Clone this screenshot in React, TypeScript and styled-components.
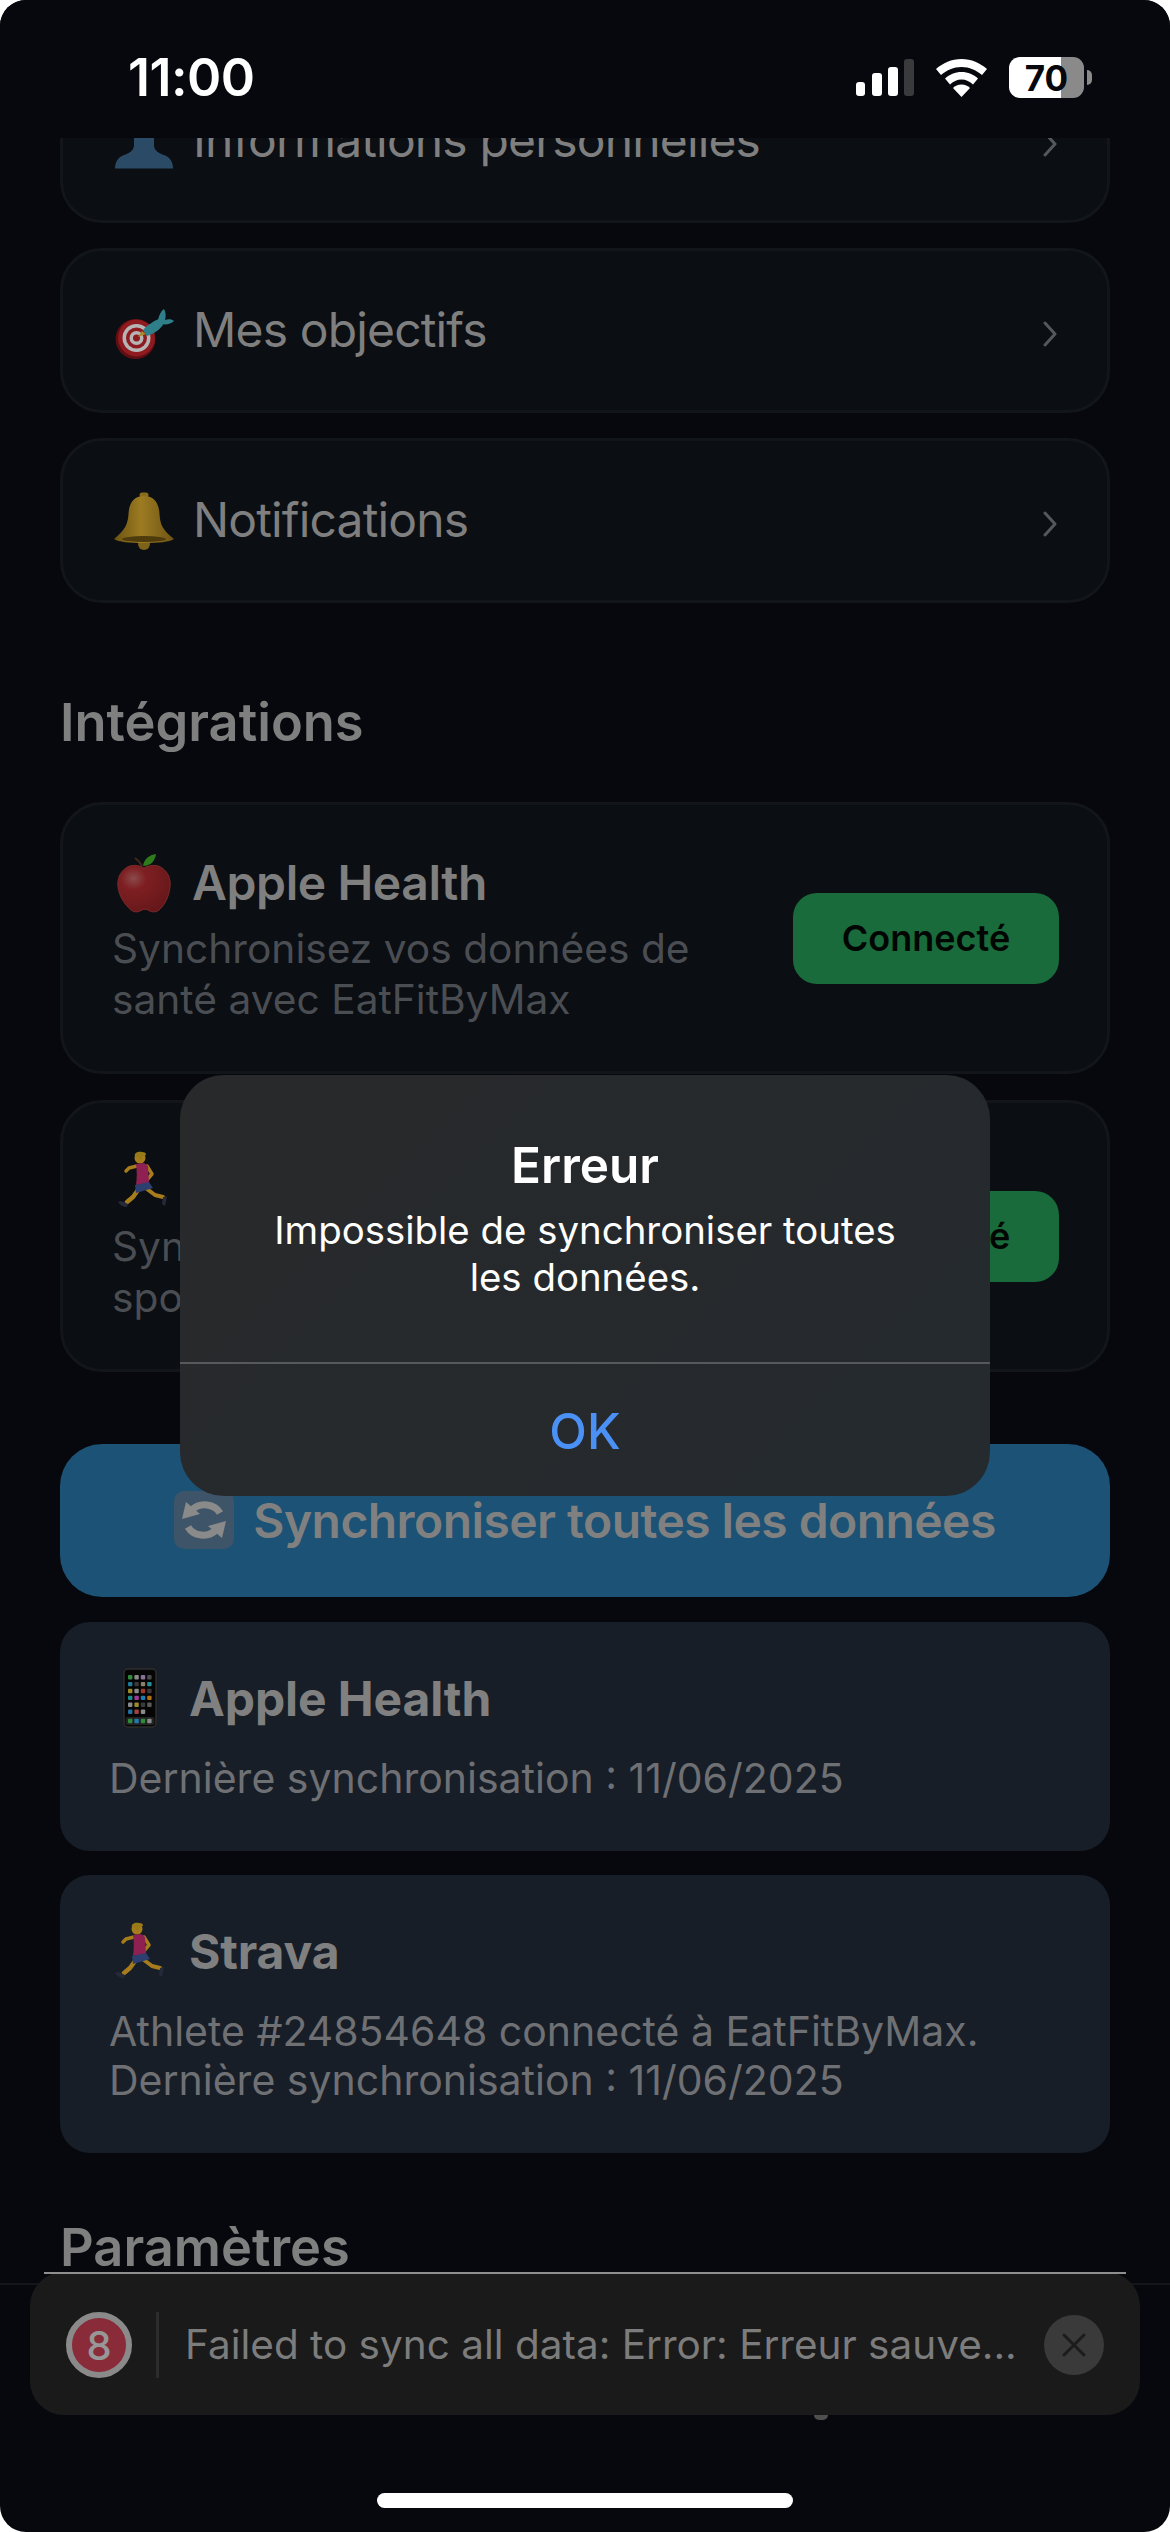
import React from "react";
import styled, { createGlobalStyle } from "styled-components";

const Global = createGlobalStyle`
  html, body { margin: 0; padding: 0; background: #fff; }
  body { font-family: Inter, "Noto Sans", sans-serif; -webkit-font-smoothing: antialiased; }
`;

const Screen = styled.div`
  position: relative;
  width: 1170px;
  height: 2532px;
  overflow: hidden;
  border-radius: 26px;
  background: #06080d;
  display: flex;
  flex-direction: column;
`;

const StatusBar = styled.header`
  height: 138px;
  flex-shrink: 0;
  display: flex;
  align-items: flex-start;
  justify-content: space-between;
  padding: 57px 86px 0 128px;
  box-sizing: border-box;
  background: #06080d;
`;

const Clock = styled.span`
  font-size: 52px;
  line-height: 42px;
  font-weight: 600;
  letter-spacing: -0.5px;
  color: #fff;
`;

const StatusIcons = styled.div`
  display: flex;
  align-items: center;
  gap: 22px;
  height: 41px;
`;

const Battery = styled.div`
  position: relative;
  width: 75px;
  height: 41px;
  border-radius: 11px;
  background: linear-gradient(90deg, #fff 70%, #8a8a8a 70%);
  display: flex;
  align-items: center;
  justify-content: center;
  font-size: 35px;
  font-weight: 700;
  color: #06080d;
  &::after {
    content: "";
    position: absolute;
    left: 78px;
    top: 13px;
    width: 5px;
    height: 15px;
    border-radius: 0 8px 8px 0;
    background: #8a8a8a;
  }
`;

const Viewport = styled.main`
  height: 2145px;
  flex-shrink: 0;
  overflow: hidden;
`;

const Content = styled.div`
  margin-top: -80px;
  padding: 0 60px;
  display: flex;
  flex-direction: column;
`;

const Stack = styled.section<{ $gap: number; $top?: number }>`
  display: flex;
  flex-direction: column;
  gap: ${(p) => p.$gap}px;
  margin-top: ${(p) => p.$top ?? 0}px;
`;

const MenuRow = styled.div`
  height: 165px;
  box-sizing: border-box;
  border: 3px solid #12151a;
  border-radius: 42px;
  background: #0b0e12;
  padding: 0 49px;
  display: flex;
  align-items: center;
  gap: 17px;
`;

const EmojiSlot = styled.span<{ $size?: number }>`
  width: ${(p) => p.$size ?? 64}px;
  height: ${(p) => p.$size ?? 64}px;
  flex-shrink: 0;
  display: block;
  & > svg {
    display: block;
  }
`;

const MenuLabel = styled.span`
  flex: 1;
  font-size: 48px;
  line-height: 60px;
  letter-spacing: -0.85px;
  color: #7f7f7f;
  margin-top: -1px;
`;

const Chevron = styled.svg`
  width: 18px;
  height: 26px;
  margin-right: -2px;
  margin-top: 6px;
`;

const Heading = styled.h2<{ $top: number }>`
  margin: ${(p) => p.$top}px 0 0;
  font-size: 52.4px;
  line-height: 60px;
  font-weight: 600;
  color: #7f7f7f;
`;

const IntegrationCard = styled.article`
  height: 272px;
  box-sizing: border-box;
  border: 3px solid #12151a;
  border-radius: 42px;
  background: #0b0e12;
  padding: 0 48px 0 49px;
  display: flex;
  align-items: center;
  gap: 40px;
`;

const IntegrationInfo = styled.div`
  flex: 1;
  min-width: 0;
`;

const TitleRow = styled.div<{ $gap: number }>`
  display: flex;
  align-items: center;
  gap: ${(p) => p.$gap}px;
  height: 64px;
`;

const IntegrationTitle = styled.h3`
  margin: 0;
  font-size: 48px;
  line-height: 60px;
  font-weight: 600;
  letter-spacing: -0.4px;
  color: #7f7f7f;
`;

const IntegrationDesc = styled.p`
  margin: 8px 0 0;
  font-size: 40.7px;
  line-height: 51px;
  color: #4a4d52;
`;

const ConnectedButton = styled.div`
  width: 266px;
  height: 91px;
  flex-shrink: 0;
  border-radius: 24px;
  background: #1a6b3c;
  color: #020603;
  display: flex;
  align-items: center;
  justify-content: center;
  font-size: 36px;
  font-weight: 600;
`;

const SyncButton = styled.div`
  height: 153px;
  margin-top: 72px;
  border-radius: 42px;
  background: #1b5275;
  display: flex;
  align-items: center;
  justify-content: center;
  gap: 19px;
  font-size: 48px;
  font-weight: 600;
  letter-spacing: -0.57px;
  color: #808080;
`;

const SyncCard = styled.article`
  border-radius: 30px;
  background: #171e27;
  padding: 45px 49px 48px;
`;

const SyncTitle = styled.h3`
  margin: 0;
  font-size: 48px;
  line-height: 60px;
  font-weight: 700;
  letter-spacing: -0.1px;
  color: #808080;
`;

const SyncText = styled.p`
  margin: 23px 0 0;
  font-size: 41px;
  line-height: 49px;
  color: #6f7074;
`;

const TabBar = styled.nav`
  flex: 1;
  border-top: 2px solid #14161a;
  box-sizing: border-box;
  display: flex;
  align-items: flex-start;
  justify-content: flex-end;
  padding: 130px 342px 0 0;
`;

const TabMark = styled.span`
  width: 14px;
  height: 5px;
  border-radius: 0 0 10px 10px;
  background: #4f4f4f;
`;

const Alert = styled.div`
  position: absolute;
  left: 180px;
  top: 1075px;
  width: 810px;
  height: 421px;
  border-radius: 44px;
  background: linear-gradient(135deg, #28292b 0%, #242a2e 100%);
  color: #fff;
  display: flex;
  flex-direction: column;
  text-align: center;
`;

const AlertBody = styled.div`
  height: 289px;
  box-sizing: border-box;
  padding: 60px 40px 0;
  border-bottom: 2px solid #56595c;
`;

const AlertTitle = styled.div`
  font-size: 49.5px;
  line-height: 60px;
  font-weight: 600;
`;

const AlertMessage = styled.div`
  margin-top: 12px;
  font-size: 38.4px;
  line-height: 47px;
`;

const AlertAction = styled.div`
  flex: 1;
  display: flex;
  align-items: center;
  justify-content: center;
  font-size: 49px;
  font-weight: 500;
  color: #4a90f5;
  padding-top: 2px;
`;

const Toast = styled.div`
  position: absolute;
  left: 30px;
  right: 30px;
  top: 2272px;
  height: 143px;
  box-sizing: border-box;
  border-radius: 34px;
  background: #1a1a1a;
  display: flex;
  align-items: flex-start;
  padding: 40px 36px 0;
  &::before {
    content: "";
    position: absolute;
    left: 14px;
    right: 14px;
    top: 0;
    height: 2px;
    background: #8f8f8f;
  }
`;

const ToastBadge = styled.div`
  width: 66px;
  height: 66px;
  box-sizing: border-box;
  border: 6px solid #8a8a8a;
  border-radius: 50%;
  background: #8a2b3a;
  color: #979797;
  display: flex;
  align-items: center;
  justify-content: center;
  font-size: 40px;
  font-weight: 500;
  flex-shrink: 0;
`;

const ToastDivider = styled.div`
  width: 3px;
  height: 66px;
  margin: 0 26px 0 24px;
  background: #2c2c2c;
  flex-shrink: 0;
`;

const ToastText = styled.div`
  flex: 1;
  min-width: 0;
  font-size: 40.5px;
  line-height: 66px;
  color: #7c7c7c;
  white-space: nowrap;
`;

const ToastClose = styled.div`
  width: 60px;
  height: 60px;
  margin-top: 3px;
  margin-left: 27px;
  border-radius: 50%;
  background: #3a3a3a;
  display: flex;
  align-items: center;
  justify-content: center;
  flex-shrink: 0;
`;

const HomeIndicator = styled.div`
  position: absolute;
  left: 377px;
  top: 2493px;
  width: 416px;
  height: 15px;
  border-radius: 8px;
  background: #fff;
`;

const SvgIcon = ({ children }: { children: React.ReactNode }) => (
  <EmojiSlot>
    <svg width={64} height={64} viewBox="0 0 64 64">
      {children}
    </svg>
  </EmojiSlot>
);

const BustEmoji = () => (
  <SvgIcon>
    <circle cx="32" cy="18" r="15" fill="#2a4a66" />
    <path d="M22 24h20v12c0 5 4 8 10 10 6 2 9 7 9 13.500H3C3 53 6 48 12 46c6-2 10-5 10-10z" fill="#2a4a66" />
  </SvgIcon>
);

const DartEmoji = () => (
  <SvgIcon>
    <circle cx="23.500" cy="40" r="20" fill="#5f0f14" />
    <circle cx="24.500" cy="39" r="18.500" fill="#8f1a20" />
    <circle cx="24.500" cy="39" r="14" fill="#b5b5b5" />
    <circle cx="24.500" cy="39" r="10.500" fill="#8f1a20" />
    <circle cx="24.500" cy="39" r="7" fill="#b5b5b5" />
    <circle cx="24.500" cy="39" r="3.500" fill="#8f1a20" />
    <path d="M26 38l4-6 4 3z" fill="#a88a22" />
    <path d="M31 31c4-5 11-9 16-11l5 4c-3 6-10 11-17 13z" fill="#2f7f8a" />
    <path d="M46 21c1-5 3-9 6-11 2 3 2 7 1 11 3-1 7-1 9 1-3 3-8 4-12 3z" fill="#2f7f8a" />
  </SvgIcon>
);

const BellEmoji = () => (
  <SvgIcon>
    <defs>
      <linearGradient id="bellG" x1="0" x2="1">
        <stop offset="0" stopColor="#6a5212" />
        <stop offset="0.45" stopColor="#9c7b22" />
        <stop offset="1" stopColor="#6f5414" />
      </linearGradient>
    </defs>
    <rect x="27.500" y="3.500" width="9" height="5" rx="2.500" fill="#8a6d1c" />
    <circle cx="32" cy="55" r="6" fill="#7d621a" />
    <path d="M32 7c11 0 15 8 15.500 18 .5 10 3 16 14.500 25-4 3-16 4-30 4S6 53 2 50c11-9 14-15 14.500-25C17 15 21 7 32 7z" fill="url(#bellG)" />
    <ellipse cx="32" cy="50" rx="22" ry="3" fill="#4e3c0d" />
  </SvgIcon>
);

const AppleEmoji = () => (
  <SvgIcon>
    <defs>
      <radialGradient id="appleG" cx="0.3" cy="0.28" r="0.8">
        <stop offset="0" stopColor="#8a4a4a" />
        <stop offset="0.3" stopColor="#7e1f22" />
        <stop offset="1" stopColor="#66171a" />
      </radialGradient>
    </defs>
    <path d="M30 15c-2-4-4-6-7-8" stroke="#46281a" strokeWidth="2" fill="none" />
    <path d="M31 15c1-7 6-11 13-12-1 7-5 12-13 12z" fill="#2f7a1c" />
    <path d="M32 17c5-3 13-4 18 0 6 4 9 11 8 19-1 9-5 18-11 23-4 3-8 2-11 0-2-1-4-1-6 0-3 2-7 3-11 0C13 54 7 45 6 36c-1-8 2-15 8-19 5-4 13-3 18 0z" fill="url(#appleG)" stroke="#7a2a2a" strokeWidth="1" />
  </SvgIcon>
);

const RunnerEmoji = () => (
  <SvgIcon>
    <g fill="none" stroke="#a77c1c" strokeLinecap="round" strokeLinejoin="round">
      <path d="M26 41l-5 7-6 5" strokeWidth="4.500" />
      <path d="M35 40l8 6 8 2" strokeWidth="4" />
      <path d="M25 17l-8 2-3 3" strokeWidth="3.500" />
      <path d="M35 17l5 8-6 7" strokeWidth="3.500" />
    </g>
    <circle cx="28" cy="9" r="5.500" fill="#a77c1c" />
    <path d="M23 7c-1-3 3-5 7-4 3 0 4 1 4 3l-3 1-2 4c-2-2-4-3-6-4z" fill="#9a7a18" />
    <path d="M24 15l8-1 4 3 1 17-13 2c1-7 1-14 0-21z" fill="#8f2152" />
    <path d="M23 36l14-3 4 6-10 3-7 2z" fill="#2c3f6e" />
    <path d="M6 53l3-1c3 1 5 2 7 3l-1 3c-4 0-7-2-9-5z" fill="#252a3a" />
    <path d="M55 47l-2 10-3-2 1-7z" fill="#252a3a" />
  </SvgIcon>
);

const SyncEmoji = () => (
  <EmojiSlot $size={60}>
    <svg width="60" height="60" viewBox="0 0 60 60">
      <rect x="0" y="0" width="60" height="58" rx="10" fill="#3e5569" />
      <path d="M46 22A17 15 0 0 0 18 19" fill="none" stroke="#8a8a8a" strokeWidth="7" />
      <path d="M8 28l4-17 14 12z" fill="#8a8a8a" />
      <path d="M14 36A17 15 0 0 0 42 39" fill="none" stroke="#8a8a8a" strokeWidth="7" />
      <path d="M52 30l-4 17-14-12z" fill="#8a8a8a" />
    </svg>
  </EmojiSlot>
);

const appColors = [
  "#2f8a3a", "#8a8a8a", "#8a6f9a", "#4a4a4a",
  "#1f7a9a", "#3a3a3a", "#8a7f6a", "#2a8a9a",
  "#9a8a2a", "#8a8a8a", "#9a3a2a", "#3a3a3a",
  "#1a8a8a", "#a03a9a", "#1f7ab0", "#b0700f",
  "#8a8a8a", "#9a8a2a", "#3a3a3a", "#5a5a5a",
  "#1f6fa0", "#a04040", "#8a8a8a", "#050505",
];
const dockColors = ["#2f8a3a", "#1f7ab0", "#2f8a3a", "#8a8a8a"];

const PhoneEmoji = () => (
  <SvgIcon>
    <rect x="15" y="2" width="32" height="58" rx="4" fill="#050505" stroke="#2e2e2e" strokeWidth="1.500" />
    {appColors.map((c, i) => (
      <rect key={i} x={19 + (i % 4) * 6.4} y={8 + Math.floor(i / 4) * 6.9} width="4.400" height="4.400" rx="1" fill={c} />
    ))}
    <rect x="16.500" y="50" width="29" height="8" rx="2" fill="#222" />
    {dockColors.map((c, i) => (
      <rect key={i} x={19 + i * 6.4} y="51.800" width="4.400" height="4.400" rx="1" fill={c} />
    ))}
  </SvgIcon>
);

const Arrow = () => (
  <Chevron viewBox="0 0 18 26">
    <path d="M3 2l10 11L3 24" fill="none" stroke="#55585b" strokeWidth="3" strokeLinecap="round" strokeLinejoin="round" />
  </Chevron>
);

export default function App() {
  return (
    <>
      <Global />
      <Screen>
        <StatusBar>
          <Clock>11:00</Clock>
          <StatusIcons>
            <svg width="58" height="38" viewBox="0 0 58 38">
              <rect x="0" y="23" width="9" height="14" rx="3" fill="#fff" />
              <rect x="16" y="14" width="10" height="23" rx="3" fill="#fff" />
              <rect x="32" y="8" width="10" height="29" rx="3" fill="#fff" />
              <rect x="48" y="0" width="10" height="37" rx="3" fill="#3a3a3c" />
            </svg>
            <svg width="51" height="38" viewBox="0 0 51 38">
              <path d="M25.500 0C15.500 0 7 4 0 10l5 6c6-5 12.500-8 20.500-8S40 11 46 16l5-6C44 4 35.500 0 25.500 0z" fill="#fff" />
              <path d="M25.500 13c-6.500 0-12 2.500-16.500 6.500l5 6c3-3 7-5 11.500-5s8.500 2 11.500 5l5-6C37.500 15.500 32 13 25.500 13z" fill="#fff" />
              <path d="M25.500 25.500c-3.500 0-6.500 1.500-8.500 3.500l8.500 9 8.500-9c-2-2-5-3.500-8.500-3.500z" fill="#fff" />
            </svg>
            <Battery>70</Battery>
          </StatusIcons>
        </StatusBar>

        <Viewport>
          <Content>
            <Stack $gap={25}>
              <MenuRow>
                <BustEmoji />
                <MenuLabel>Informations personnelles</MenuLabel>
                <Arrow />
              </MenuRow>
              <MenuRow>
                <DartEmoji />
                <MenuLabel>Mes objectifs</MenuLabel>
                <Arrow />
              </MenuRow>
              <MenuRow>
                <BellEmoji />
                <MenuLabel>Notifications</MenuLabel>
                <Arrow />
              </MenuRow>
            </Stack>

            <Heading $top={89}>Intégrations</Heading>

            <Stack $gap={26} $top={50}>
              <IntegrationCard>
                <IntegrationInfo>
                  <TitleRow $gap={16}>
                    <AppleEmoji />
                    <IntegrationTitle>Apple Health</IntegrationTitle>
                  </TitleRow>
                  <IntegrationDesc>
                    Synchronisez vos données de
                    <br />
                    santé avec EatFitByMax
                  </IntegrationDesc>
                </IntegrationInfo>
                <ConnectedButton>Connecté</ConnectedButton>
              </IntegrationCard>
              <IntegrationCard>
                <IntegrationInfo>
                  <TitleRow $gap={16}>
                    <RunnerEmoji />
                    <IntegrationTitle>Strava</IntegrationTitle>
                  </TitleRow>
                  <IntegrationDesc>
                    Synchronisez vos activités
                    <br />
                    sportives avec EatFitByMax
                  </IntegrationDesc>
                </IntegrationInfo>
                <ConnectedButton>Connecté</ConnectedButton>
              </IntegrationCard>
            </Stack>

            <SyncButton>
              <SyncEmoji />
              <span>Synchroniser toutes les données</span>
            </SyncButton>

            <Stack $gap={24} $top={25}>
              <SyncCard>
                <TitleRow $gap={16}>
                  <PhoneEmoji />
                  <SyncTitle>Apple Health</SyncTitle>
                </TitleRow>
                <SyncText>Dernière synchronisation : 11/06/2025</SyncText>
              </SyncCard>
              <SyncCard>
                <TitleRow $gap={16}>
                  <RunnerEmoji />
                  <SyncTitle>Strava</SyncTitle>
                </TitleRow>
                <SyncText>
                  Athlete #24854648 connecté à EatFitByMax.
                  <br />
                  Dernière synchronisation : 11/06/2025
                </SyncText>
              </SyncCard>
            </Stack>

            <Heading $top={64}>Paramètres</Heading>
          </Content>
        </Viewport>

        <TabBar>
          <TabMark />
        </TabBar>

        <Alert>
          <AlertBody>
            <AlertTitle>Erreur</AlertTitle>
            <AlertMessage>
              Impossible de synchroniser toutes
              <br />
              les données.
            </AlertMessage>
          </AlertBody>
          <AlertAction>OK</AlertAction>
        </Alert>

        <Toast>
          <ToastBadge>8</ToastBadge>
          <ToastDivider />
          <ToastText>Failed to sync all data: Error: Erreur sauve...</ToastText>
          <ToastClose>
            <svg width="26" height="26" viewBox="0 0 26 26">
              <path d="M3 3l20 20M23 3L3 23" stroke="#1c1c1c" strokeWidth="3" strokeLinecap="round" />
            </svg>
          </ToastClose>
        </Toast>

        <HomeIndicator />
      </Screen>
    </>
  );
}
